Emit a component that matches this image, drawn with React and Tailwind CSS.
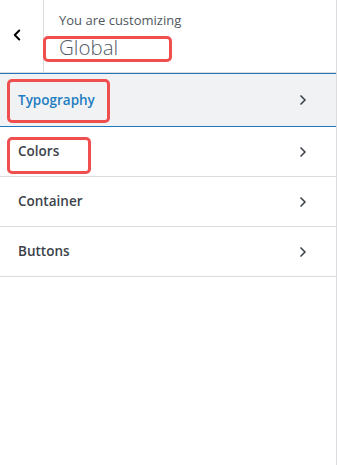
import { ChevronLeft, ChevronRight } from 'lucide-react'

const sections = [
  { id: 'typography', label: 'Typography', active: true },
  { id: 'colors', label: 'Colors' },
  { id: 'container', label: 'Container' },
  { id: 'buttons', label: 'Buttons' },
]

function Marker({ className }) {
  return <div className={`pointer-events-none absolute rounded-[5px] border-[3px] border-[#f04f4f] ${className}`} />
}

export default function App() {
  return (
    <div className="min-h-[465px] w-[337px] border-r border-[#dcdcde] bg-white font-['Open_Sans',sans-serif] text-[#3c434a]">
      {/* Header */}
      <div className="flex h-[73px] border-b border-[#dcdcde] bg-white">
        <button className="flex w-[44px] shrink-0 items-center justify-center border-r border-[#dcdcde] text-black">
          <ChevronLeft className="h-[18px] w-[18px] -translate-x-[5px] -translate-y-[1px]" strokeWidth={2.6} />
        </button>
        <div className="relative flex-1 pl-[15px] pt-[11px]">
          <p className="text-[13px] leading-[18px] text-[#50575e]">You are customizing</p>
          <p className="mt-[5px] text-[20.5px] font-light leading-[26px] text-[#4f5a66]">Global</p>
          <Marker className="left-[-1px] top-[36px] h-[26px] w-[129px]" />
        </div>
      </div>

      {/* Sections */}
      <ul>
        {sections.map((s) =>
          s.active ? (
            <li
              key={s.id}
              className="relative flex h-[54px] items-center justify-between border-y border-[#1f78bd] bg-[#f1f2f4] pl-[18px] pr-[25px]"
            >
              <span className="text-[13.5px] font-semibold text-[#1e7dc1]">{s.label}</span>
              <ChevronRight className="h-[16px] w-[16px] text-[#3c434a]" strokeWidth={2.5} />
              <Marker className="left-[7px] top-[5px] h-[44px] w-[103px]" />
            </li>
          ) : (
            <li
              key={s.id}
              className="relative flex h-[50px] items-center justify-between border-b border-[#dcdcde] pl-[18px] pr-[25px]"
            >
              <span className="text-[13.5px] font-semibold">{s.label}</span>
              <ChevronRight className="h-[16px] w-[16px] text-[#3c434a]" strokeWidth={2.5} />
              {s.id === 'colors' && <Marker className="left-[7px] top-[10px] h-[37px] w-[84px]" />}
            </li>
          )
        )}
      </ul>
    </div>
  )
}
